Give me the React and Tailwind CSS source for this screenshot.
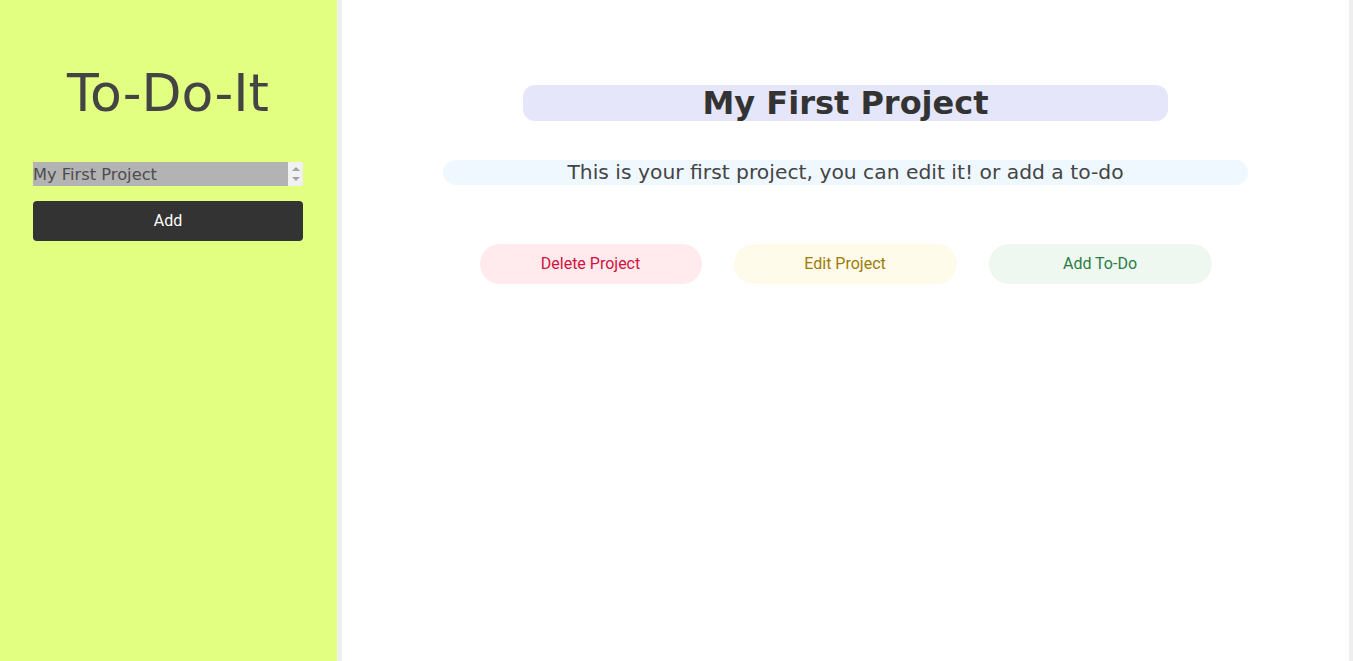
const dejavu = { fontFamily: '"DejaVu Sans", Verdana, sans-serif' };

function ProjectList() {
  return (
    <div className="flex w-[270px] h-[24px]">
      <div className="flex-1 bg-[#b3b3b3] text-[16.3px] leading-[22px] pt-[2px] text-[#4d4d4d] truncate" style={dejavu}>
        My First Project
      </div>
      <div className="w-[15px] bg-[#f1f1f1] flex flex-col items-center justify-between py-[5px]">
        <div className="w-0 h-0 border-l-[4px] border-r-[4px] border-b-[4px] border-l-transparent border-r-transparent border-b-[#a3a3a3]" />
        <div className="w-0 h-0 border-l-[4px] border-r-[4px] border-t-[4px] border-l-transparent border-r-transparent border-t-[#a3a3a3]" />
      </div>
    </div>
  );
}

export default function App() {
  return (
    <div className="flex h-screen bg-[#eeeeee] gap-[5px] pr-[4px] overflow-hidden">
      {/* sidebar */}
      <aside className="w-[337px] shrink-0 bg-[#e3ff82] flex flex-col pl-[33px] pt-[63px]">
        <h1 className="w-[270px] text-center text-[52px] text-[#444444]" style={{ ...dejavu, lineHeight: 'normal' }}>
          To-Do-It
        </h1>
        <div className="mt-[39px] flex flex-col gap-[15px]">
          <ProjectList />
          <button className="w-[270px] h-[40px] rounded-[4px] bg-[#333333] text-white text-[16px] font-['Roboto',sans-serif]">
            Add
          </button>
        </div>
      </aside>

      {/* project view */}
      <main className="flex-1 bg-white flex flex-col items-center pt-[85px]">
        <h2
          className="w-[64%] bg-[#e6e6fa] rounded-[12px] text-center font-bold text-[32px] leading-[36px] text-[#333333]"
          style={dejavu}
        >
          My First Project
        </h2>
        <p
          className="mt-[39px] w-[80%] bg-[#f0f8ff] rounded-full text-center text-[20.3px] leading-[25px] text-[#444444]"
          style={dejavu}
        >
          This is your first project, you can edit it! or add a to-do
        </p>
        <div className="mt-[59px] flex gap-[32px] font-['Roboto',sans-serif] text-[16px]">
          <button className="w-[222px] h-[40px] rounded-full bg-[#ffebee] text-[#d3113c]">Delete Project</button>
          <button className="w-[223px] h-[40px] rounded-full bg-[#fffbea] text-[#9c7a06]">Edit Project</button>
          <button className="w-[223px] h-[40px] rounded-full bg-[#eef8f0] text-[#2a7d45]">Add To-Do</button>
        </div>
      </main>
    </div>
  );
}
